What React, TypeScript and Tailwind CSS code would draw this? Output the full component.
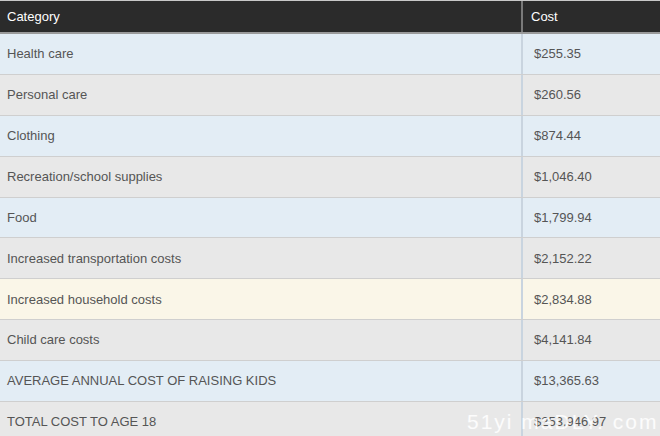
import React from "react";

const rows: { c: string; v: string; bg: string }[] = [
  { c: "Health care", v: "$255.35", bg: "bg-[#e3edf5]" },
  { c: "Personal care", v: "$260.56", bg: "bg-[#e8e8e8]" },
  { c: "Clothing", v: "$874.44", bg: "bg-[#e3edf5]" },
  { c: "Recreation/school supplies", v: "$1,046.40", bg: "bg-[#e8e8e8]" },
  { c: "Food", v: "$1,799.94", bg: "bg-[#e3edf5]" },
  { c: "Increased transportation costs", v: "$2,152.22", bg: "bg-[#e8e8e8]" },
  { c: "Increased household costs", v: "$2,834.88", bg: "bg-[#faf6e8]" },
  { c: "Child care costs", v: "$4,141.84", bg: "bg-[#e8e8e8]" },
  { c: "AVERAGE ANNUAL COST OF RAISING KIDS", v: "$13,365.63", bg: "bg-[#e3edf5]" },
  { c: "TOTAL COST TO AGE 18", v: "$253,946.97", bg: "bg-[#e8e8e8]" },
];

export default function App() {
  return (
    <div
      className="relative w-[660px] h-[436px] overflow-hidden bg-white"
      style={{ fontFamily: '"Liberation Sans", Arial, sans-serif' }}
    >
      <div className="border-t border-[#c8c8c8]">
        <div className="flex h-[33px] bg-[#2b2b2b] border-b-2 border-[#9a9a9a] text-white text-[13px]">
          <div className="w-[523px] flex items-center pl-[7px] border-r-2 border-[#7a7a7a]">Category</div>
          <div className="flex-1 flex items-center pl-[8px]">Cost</div>
        </div>
        {rows.map((r, i) => (
          <div key={i} className={`flex h-[40.9px] ${r.bg} border-b border-[#cfcfcf] text-[13px] text-[#555555]`}>
            <div className="w-[523px] flex items-center pl-[7px] border-r-2 border-[#c9d4df]">{r.c}</div>
            <div className="flex-1 flex items-center pl-[11px]">{r.v}</div>
          </div>
        ))}
      </div>
      <div className="absolute left-[467px] top-[406px] text-[21px] text-white/85 tracking-[2px] whitespace-pre">
        51yi maDLY. com
      </div>
    </div>
  );
}
